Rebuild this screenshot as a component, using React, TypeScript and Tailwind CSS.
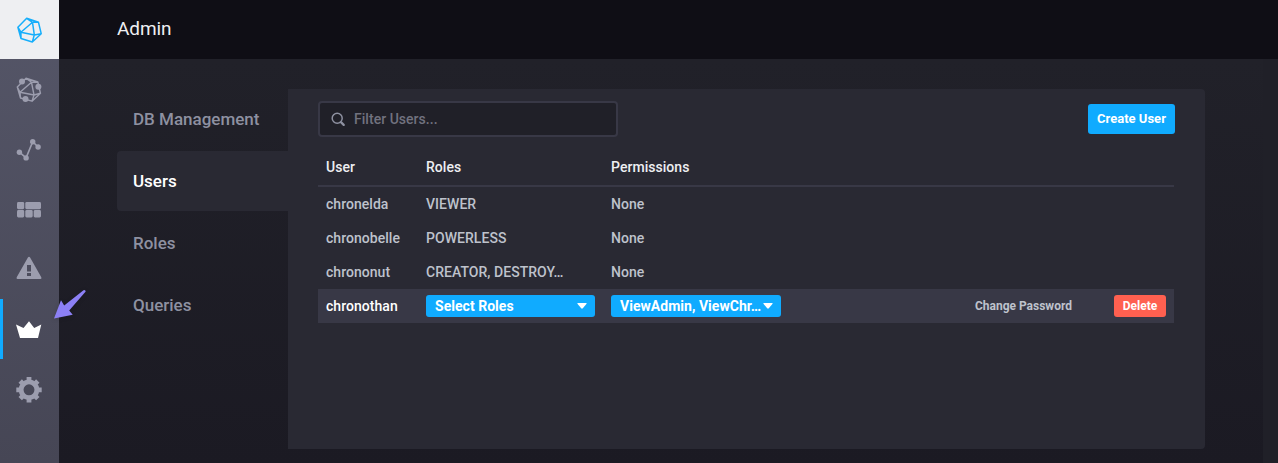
import type { ReactNode } from "react";

type NavItem = { name: string; active?: boolean; icon: ReactNode };

const navItems: NavItem[] = [
  {
    name: "Hosts",
    icon: (
      <svg width="30" height="30" viewBox="0 0 30 30" fill="none" stroke="currentColor" strokeWidth="1.4" strokeLinejoin="round">
        <path d="M12 3.2 L23.8 7 L26.5 18.3 L18 26.2 L6.5 23 L3.3 12 Z M12 3.2 L17.5 7.3 L23.8 7 M17.5 7.3 L6 17.3 M17.5 7.3 L20 20 M6 17.3 L20 20 L26.5 18.3 M3.3 12 L6 17.3 L6.5 23 M20 20 L18 26.2" />
        <g fill="currentColor" stroke="none">
          <circle cx="8" cy="6.4" r="3" />
          <circle cx="24.4" cy="11.7" r="3" />
          <circle cx="11.5" cy="24" r="3" />
        </g>
      </svg>
    ),
  },
  {
    name: "Explore",
    icon: (
      <svg width="30" height="30" viewBox="0 0 30 30" fill="currentColor">
        <path d="M5.4 17.2 L12.1 22.9 L18.7 6.7 L24.1 12" fill="none" stroke="currentColor" strokeWidth="1.6" />
        <circle cx="5.4" cy="17.2" r="2.7" />
        <circle cx="12.1" cy="22.9" r="2.7" />
        <circle cx="18.7" cy="6.7" r="2.7" />
        <circle cx="24.1" cy="12" r="2.7" />
      </svg>
    ),
  },
  {
    name: "Dashboards",
    icon: (
      <svg width="30" height="30" viewBox="0 0 30 30" fill="currentColor">
        <rect x="3" y="7" width="7.2" height="7.2" rx="1.4" />
        <rect x="11.3" y="7" width="15.7" height="7.2" rx="1.4" />
        <rect x="3" y="15.1" width="7.2" height="7.3" rx="1.4" />
        <rect x="11.3" y="15.1" width="7.4" height="7.3" rx="1.4" />
        <rect x="19.7" y="15.1" width="7.3" height="7.3" rx="1.4" />
      </svg>
    ),
  },
  {
    name: "Alerting",
    icon: (
      <svg width="30" height="30" viewBox="0 0 30 30" fill="currentColor">
        <path fillRule="evenodd" d="M13.9 2.6 Q15 1 16.1 2.6 L27.3 22.3 Q28 24 26.5 24 H3.5 Q2 24 2.7 22.3 Z M13 10 V16.5 H17 V10 Z M13 18 V21 H17 V18 Z" />
      </svg>
    ),
  },
  {
    name: "Admin",
    active: true,
    icon: (
      <svg width="30" height="30" viewBox="0 0 30 30" fill="currentColor">
        <path d="M6 23 L2 9.5 L9.5 13 L15 6.3 L20.2 13 L27.3 9.5 L24 23 Z" />
      </svg>
    ),
  },
  {
    name: "Configuration",
    icon: (
      <svg width="30" height="30" viewBox="0 0 30 30" fill="none" stroke="currentColor">
        <circle cx="15" cy="14.8" r="7.9" strokeWidth="4.9" />
        <path strokeWidth="4.8" d="M15 2.1V7M15 22.6V27.5M2.3 14.8H7M23 14.8H27.7M6.2 6L9.3 9.1M20.7 20.5L23.8 23.6M23.8 6L20.7 9.1M9.3 20.5L6.2 23.6" />
      </svg>
    ),
  },
];

const tabs = ["DB Management", "Users", "Roles", "Queries"];

const users = [
  { name: "chronelda", roles: "VIEWER", permissions: "None" },
  { name: "chronobelle", roles: "POWERLESS", permissions: "None" },
  { name: "chrononut", roles: "CREATOR, DESTROY…", permissions: "None" },
];

function Sidebar() {
  return (
    <nav className="flex w-[59px] shrink-0 flex-col bg-linear-to-b from-[#555668] to-[#464655]">
      <div className="flex h-[59px] items-center justify-center bg-[#eeeff2] text-[#16aefb]">
        <svg width="30" height="30" viewBox="0 0 30 30" fill="none" stroke="currentColor" strokeWidth="1.5" strokeLinejoin="round">
          <path d="M11.7 3.3 L23.5 7.3 L26.2 18.7 L17.3 27 L6 23.5 L2.9 12.2 Z M11.7 3.3 L17.5 7.3 L23.5 7.3 M17.5 7.3 L5.9 17.2 M17.5 7.3 L19.3 19.9 M5.9 17.2 L19.3 19.9 L26.2 18.7 M2.9 12.2 L5.9 17.2 L6 23.5 M19.3 19.9 L17.3 27" />
        </svg>
      </div>
      {navItems.map((item) => (
        <a
          key={item.name}
          aria-label={item.name}
          className={
            item.active
              ? "flex h-[60px] items-center border-l-3 border-[#10abff] pt-0.5 pl-[11px] text-white"
              : "flex h-[60px] items-center pt-0.5 pl-3.5 text-[#9c9dae]"
          }
        >
          {item.icon}
        </a>
      ))}
    </nav>
  );
}

function Dropdown({ label }: { label: string }) {
  return (
    <button className="flex h-[22px] items-center justify-between rounded-[3px] bg-[#10abff] pr-2 pl-[9px] text-sm font-bold text-white">
      <span className="tracking-[0.03px]">{label}</span>
      <svg width="10" height="6" viewBox="0 0 10 6" fill="currentColor">
        <path d="M1 0H9Q10.2 0 9.4 1L5.8 5.3Q5 6.2 4.2 5.3L0.6 1Q-0.2 0 1 0Z" />
      </svg>
    </button>
  );
}

export default function App() {
  return (
    <div className="relative flex h-[463px] w-[1278px] overflow-hidden bg-[#202028] font-['Roboto',sans-serif]">
      <Sidebar />
      <div className="flex min-w-0 flex-1 flex-col">
        <header className="flex h-[59px] items-center bg-[#0f0e15] pl-[58px] text-[19px] tracking-[-0.1px] text-[#eeeff2]">
          <h1>Admin</h1>
        </header>
        <div className="flex min-h-0 flex-1">
          <main className="flex flex-1 bg-linear-to-b from-[#212129] to-[#1b1a23] pt-[30px] pr-[58px] pb-3.5 pl-[58px]">
            <div className="flex w-[171px] shrink-0 flex-col gap-0.5 text-[17px] font-medium">
              {tabs.map((tab) => (
                <div
                  key={tab}
                  className={
                    tab === "Users"
                      ? "flex h-[60px] items-center rounded-l bg-[#292933] pt-0.5 pl-4 text-white"
                      : "flex h-[60px] items-center pt-0.5 pl-4 text-[#8e91a1]"
                  }
                >
                  {tab}
                </div>
              ))}
            </div>
            <section className="flex flex-1 flex-col rounded-r bg-[#292933] pt-3 pr-[30px] pl-[30px]">
              <div className="flex h-9 items-center justify-between">
                <div className="flex h-9 w-[300px] items-center gap-[9px] rounded border-2 border-[#383846] bg-[#202028] pl-[11px] text-sm font-medium text-[#71727f]">
                  <svg width="14" height="14" viewBox="0 0 14 14" fill="none" stroke="#8e91a1" strokeLinecap="round">
                    <circle cx="6.2" cy="6.3" r="5" strokeWidth="1.5" />
                    <path d="M10.2 10.4L12.7 12.9" strokeWidth="2.2" />
                  </svg>
                  <span className="tracking-[0.03px]">Filter Users...</span>
                </div>
                <button className="h-[30px] w-[87px] rounded-[3px] bg-[#10abff] text-[13px] font-bold text-white">Create User</button>
              </div>
              <div className="mt-3 grid h-[38px] w-[856px] grid-cols-[100px_185px_1fr] items-center border-b-2 border-[#383846] pl-2 text-sm font-medium tracking-[0.04px] text-[#eeeff2]">
                <span>User</span>
                <span>Roles</span>
                <span>Permissions</span>
              </div>
              {users.map((user) => (
                <div key={user.name} className="grid h-[34px] w-[856px] grid-cols-[100px_185px_1fr] items-center pl-2 text-sm font-medium tracking-[0.04px] text-[#bec2cc]">
                  <span>{user.name}</span>
                  <span>{user.roles}</span>
                  <span>{user.permissions}</span>
                </div>
              ))}
              <div className="grid h-[34px] w-[856px] grid-cols-[100px_169px_186px_1fr_52px] items-center bg-[#383846] pr-2 pl-2 text-sm font-medium text-white">
                <span className="tracking-[0.04px]">chronothan</span>
                <Dropdown label="Select Roles" />
                <div className="grid pl-4">
                  <Dropdown label="ViewAdmin, ViewChr…" />
                </div>
                <button className="mr-[42px] justify-self-end text-xs font-bold text-[#bec2cc]">Change Password</button>
                <button className="h-[22px] rounded-[3px] bg-[#ff6050] text-xs font-bold text-white">Delete</button>
              </div>
            </section>
          </main>
          <div className="w-[15px] bg-[#202028]" />
        </div>
      </div>
      <svg className="absolute top-[287px] left-[52px] drop-shadow-sm" width="36" height="34" viewBox="0 0 36 34" fill="#8c80f5">
        <path d="M2 31.5 L9 13.3 L12.2 18.4 L31.5 3.2 Q33.5 2.5 33.7 4.6 L17.2 23.6 L20.7 27.7 Z" />
      </svg>
    </div>
  );
}
